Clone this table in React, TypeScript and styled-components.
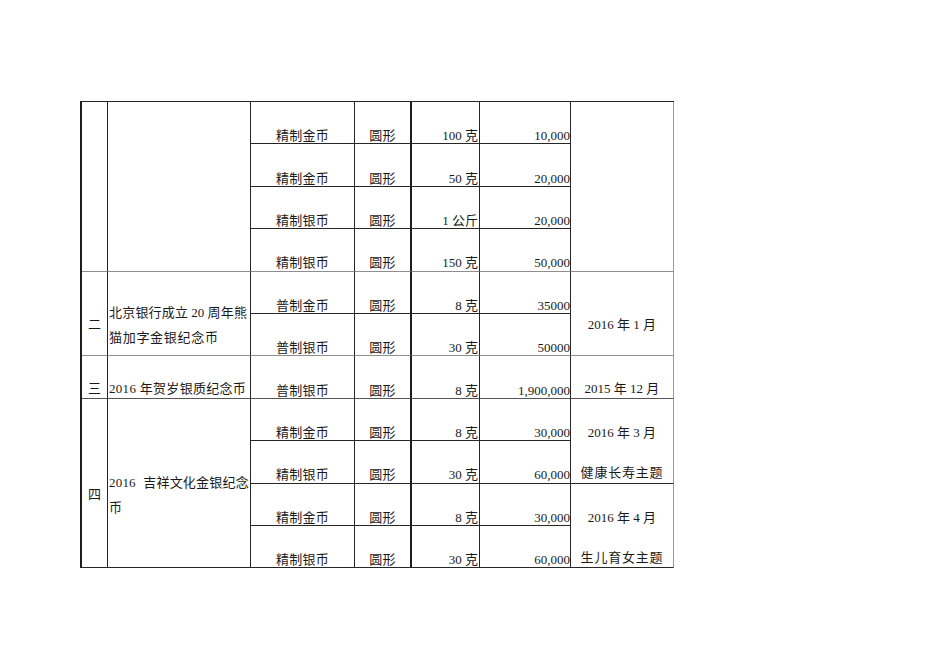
import React from 'react'
import styled, { createGlobalStyle } from 'styled-components'

const GlobalStyle = createGlobalStyle`
  html, body {
    margin: 0;
    padding: 0;
    background: #ffffff;
  }
`

type Item = [string, string, string, string]

type DateBlock = {
  span: number
  lines: string[]
}

type NameLineData = {
  text: string
  spacing?: number
  gap?: number
}

type Group = {
  index: string
  name: NameLineData[]
  sep: string
  items: Item[]
  dates: DateBlock[]
}

const DARK = '#262626'
const LIGHT = '#8e8e8e'

const groups: Group[] = [
  {
    index: '',
    name: [],
    sep: LIGHT,
    items: [
      ['精制金币', '圆形', '100 克', '10,000'],
      ['精制金币', '圆形', '50 克', '20,000'],
      ['精制银币', '圆形', '1 公斤', '20,000'],
      ['精制银币', '圆形', '150 克', '50,000'],
    ],
    dates: [{ span: 4, lines: [] }],
  },
  {
    index: '二',
    name: [
      { text: '北京银行成立 20 周年熊', spacing: 0.2, gap: -0.5 },
      { text: '猫加字金银纪念币', spacing: 0.7 },
    ],
    sep: LIGHT,
    items: [
      ['普制金币', '圆形', '8 克', '35000'],
      ['普制银币', '圆形', '30 克', '50000'],
    ],
    dates: [{ span: 2, lines: ['2016 年 1 月'] }],
  },
  {
    index: '三',
    name: [{ text: '2016 年贺岁银质纪念币', spacing: 0.3 }],
    sep: '#555555',
    items: [['普制银币', '圆形', '8 克', '1,900,000']],
    dates: [{ span: 1, lines: ['2015 年 12 月'] }],
  },
  {
    index: '四',
    name: [
      { text: '2016 吉祥文化金银纪念', spacing: 0.2, gap: 4 },
      { text: '币' },
    ],
    sep: DARK,
    items: [
      ['精制金币', '圆形', '8 克', '30,000'],
      ['精制银币', '圆形', '30 克', '60,000'],
      ['精制金币', '圆形', '8 克', '30,000'],
      ['精制银币', '圆形', '30 克', '60,000'],
    ],
    dates: [
      { span: 2, lines: ['2016 年 3 月', '健康长寿主题'] },
      { span: 2, lines: ['2016 年 4 月', '生儿育女主题'] },
    ],
  },
]

const colWidths = [26, 143, 104, 57, 68, 91, 103]

export default function App() {
  return (
    <Page>
      <GlobalStyle />
      <Sheet>
        <colgroup>
          {colWidths.map((w, i) => (
            <Col key={i} $w={w} />
          ))}
        </colgroup>
        <tbody>
          {groups.map((group, g) => {
            const n = group.items.length
            let dateStart = 0
            const dateAt: Record<number, DateBlock> = {}
            group.dates.forEach(d => {
              dateAt[dateStart] = d
              dateStart += d.span
            })

            return group.items.map((item, i) => {
              const last = i === n - 1
              const rowBottom = last ? group.sep : DARK
              const date = dateAt[i]
              const stacked = !!date && date.lines.length > 1
              return (
                <Row key={`${g}-${i}`}>
                  {i === 0 && (
                    <IndexCell rowSpan={n} $bottom={group.sep}>
                      {group.index}
                    </IndexCell>
                  )}
                  {i === 0 && (
                    <NameCell rowSpan={n} $bottom={group.sep}>
                      {group.name.map((line, k) => (
                        <NameLine
                          key={k}
                          $tall={group.name.length > 1}
                          $spacing={line.spacing ?? 0.5}
                          $gap={line.gap ?? 0}
                        >
                          {line.text}
                        </NameLine>
                      ))}
                    </NameCell>
                  )}
                  <TypeCell $bottom={rowBottom}>{item[0]}</TypeCell>
                  <ShapeCell $bottom={rowBottom}>{item[1]}</ShapeCell>
                  <WeightCell $bottom={rowBottom}>{item[2]}</WeightCell>
                  <QtyCell $bottom={rowBottom}>{item[3]}</QtyCell>
                  {date && (
                    <DateCell
                      rowSpan={date.span}
                      $bottom={i + date.span === n ? group.sep : DARK}
                      $stacked={stacked}
                    >
                      <DateStack>
                        {date.lines.map((line, k) => (
                          <DateLine key={k} $spread={!/\d/.test(line)}>
                            {line}
                          </DateLine>
                        ))}
                      </DateStack>
                    </DateCell>
                  )}
                </Row>
              )
            })
          })}
        </tbody>
      </Sheet>
    </Page>
  )
}

const Page = styled.div`
  padding: 101px 0 0 80px;
  min-height: 672px;
  box-sizing: border-box;
`

const Sheet = styled.table`
  border-collapse: separate;
  border-spacing: 0;
  table-layout: fixed;
  width: 594px;
  border-left: 2px solid #1e1e1e;
  border-top: 1px solid ${DARK};
  font-family: 'Liberation Serif', 'Noto Sans CJK SC', serif;
  font-size: 13px;
  color: #1a1a1a;
`

const Col = styled.col<{ $w: number }>`
  width: ${p => p.$w}px;
`

const Row = styled.tr`
  height: 42.4px;
`

const Cell = styled.td<{ $bottom?: string }>`
  box-sizing: border-box;
  padding: 26px 0 0;
  vertical-align: middle;
  text-align: center;
  white-space: nowrap;
  overflow: visible;
  line-height: 15px;
  border-right: 1px solid ${DARK};
  border-bottom: 1px solid ${p => p.$bottom ?? DARK};
`

const IndexCell = styled(Cell)`
  padding-top: 23px;
`

const NameCell = styled(Cell)`
  text-align: left;
  padding-left: 1px;
  padding-top: 23px;
`

const NameLine = styled.div<{ $tall: boolean; $spacing: number; $gap: number }>`
  line-height: ${p => (p.$tall ? 25 : 15)}px;
  letter-spacing: ${p => p.$spacing}px;
  word-spacing: ${p => p.$gap}px;
`

const TypeCell = styled(Cell)`
  letter-spacing: 0.3px;
`

const ShapeCell = styled(Cell)`
  border-right: 2px solid #1e1e1e;
  letter-spacing: 0.3px;
`

const WeightCell = styled(Cell)`
  text-align: right;
  padding-right: 1px;
`

const QtyCell = styled(Cell)`
  text-align: right;
`

const DateCell = styled(Cell)<{ $stacked: boolean }>`
  border-right: 1px solid #9a9a9a;
  vertical-align: ${p => (p.$stacked ? 'top' : 'middle')};
  padding-top: ${p => (p.$stacked ? 26 : 23)}px;
`

const DateStack = styled.div`
  display: flex;
  flex-direction: column;
  align-items: center;
  gap: 25px;
`

const DateLine = styled.div<{ $spread: boolean }>`
  line-height: 15px;
  letter-spacing: ${p => (p.$spread ? 0.8 : 0)}px;
`
